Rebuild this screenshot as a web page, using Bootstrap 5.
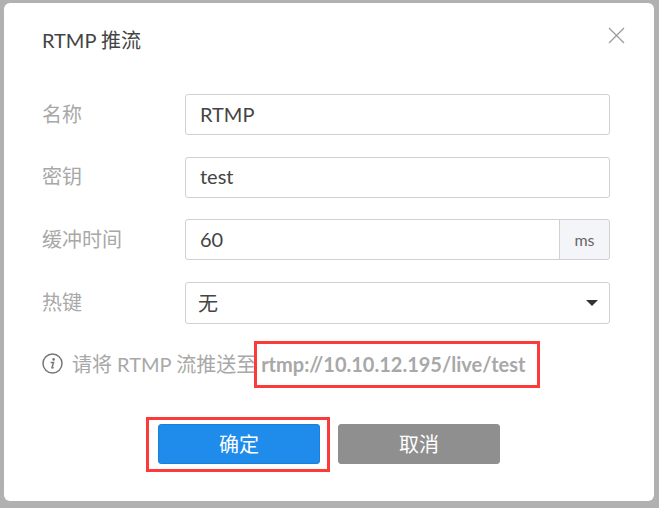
<!DOCTYPE html>
<html lang="zh">
<head>
  <meta charset="UTF-8">
  <title>RTMP 推流</title>
  <link href="https://cdn.jsdelivr.net/npm/bootstrap@5.3.3/dist/css/bootstrap.min.css" rel="stylesheet">
  <style>
    html, body { height: 100%; }
    body {
      background: #b1b1b1;
      font-family: Lato, "Noto Sans CJK SC", sans-serif;
      padding: 3px 5px 7px 4px;
      overflow: hidden;
    }
    .dlg-box {
      position: relative;
      height: 498px;
      background: #fff;
      border-radius: 6px;
      padding: 21px 44px 0 38px;
    }
    .dlg-title { font-size: 20px; line-height: 32px; color: #444; margin: 0 0 38px; font-weight: 400; }
    .dlg-close {
      position: absolute; top: 24px; right: 29px;
      padding: 0; border: 0; background: none; line-height: 0;
    }
    .form-line { margin-bottom: 21.5px; }
    .form-line label { width: 143px; flex: none; font-size: 20px; color: #a8a8a8; padding-bottom: 2px; }
    .form-line .form-control, .form-line .input-group-text, .picker-box {
      height: 41px;
      border: 1px solid #d0d0d0;
      border-radius: 3px;
      font-size: 20px;
      color: #444;
      padding: 0 14px 2px;
    }
    .form-line .input-group-text {
      width: 51px; justify-content: center; padding: 0;
      background: #f4f5f8; font-size: 16px; color: #666;
    }
    .form-line .picker-box { height: 42px; padding: 1px 11px 0 12px; background: #fff; }
    .picker-arrow {
      width: 0; height: 0;
      border-left: 6px solid transparent;
      border-right: 6px solid transparent;
      border-top: 6px solid #333;
    }
    .hint-line { font-size: 20px; color: #a8a8a8; line-height: 28px; margin-top: 26px; }
    .hint-line svg { margin-right: 9px; flex: none; }
    .hint-line b { margin-left: 5px; font-weight: 700; }
    .btn-row { margin-top: 46px; margin-left: 116px; gap: 18px; }
    .btn-row .btn {
      width: 162px; height: 40px; padding: 0;
      font-size: 20px; border-radius: 3px; color: #fff;
    }
    .btn-ok { background: #1f8ceb; border: 1px solid #1a80d8; }
    .btn-no { background: #8f8f8f; border: 1px solid #8f8f8f; }
    .red-frame { position: absolute; border: 3px solid #fb3a3a; pointer-events: none; }
    .frame-url { left: 250px; top: 338px; width: 286px; height: 47px; }
    .frame-ok { left: 142px; top: 414px; width: 184px; height: 55px; }
  </style>
</head>
<body>
  <div class="dlg-box">
    <h5 class="dlg-title">RTMP 推流</h5>
    <button type="button" class="dlg-close" aria-label="Close">
      <svg width="17" height="17" viewBox="0 0 17 17"><path d="M1 1L16 16M16 1L1 16" stroke="#999" stroke-width="1.2" fill="none"/></svg>
    </button>

    <div class="form-line d-flex align-items-center">
      <label>名称</label>
      <input class="form-control" value="RTMP">
    </div>
    <div class="form-line d-flex align-items-center">
      <label>密钥</label>
      <input class="form-control" value="test">
    </div>
    <div class="form-line d-flex align-items-center">
      <label>缓冲时间</label>
      <div class="input-group">
        <input class="form-control" value="60">
        <span class="input-group-text">ms</span>
      </div>
    </div>
    <div class="form-line d-flex align-items-center">
      <label>热键</label>
      <div class="picker-box form-control d-flex align-items-center justify-content-between">
        <span>无</span>
        <span class="picker-arrow"></span>
      </div>
    </div>

    <div class="hint-line d-flex align-items-center">
      <svg width="21" height="21" viewBox="0 0 21 21">
        <circle cx="10.5" cy="10.5" r="9.5" fill="none" stroke="#777" stroke-width="1.5"/>
        <circle cx="11.6" cy="6.4" r="1.3" fill="#777"/>
        <path d="M8.6 9.4h2.9l-1.5 5.2c-.1.5.3.6 1.6-.3" fill="none" stroke="#777" stroke-width="1.5"/>
      </svg>
      <span>请将 RTMP 流推送至</span><b>rtmp://10.10.12.195/live/test</b>
    </div>

    <div class="btn-row d-flex">
      <button type="button" class="btn btn-ok">确定</button>
      <button type="button" class="btn btn-no">取消</button>
    </div>

    <div class="red-frame frame-url"></div>
    <div class="red-frame frame-ok"></div>
  </div>
  <script src="https://cdn.jsdelivr.net/npm/bootstrap@5.3.3/dist/js/bootstrap.bundle.min.js"></script>
</body>
</html>
